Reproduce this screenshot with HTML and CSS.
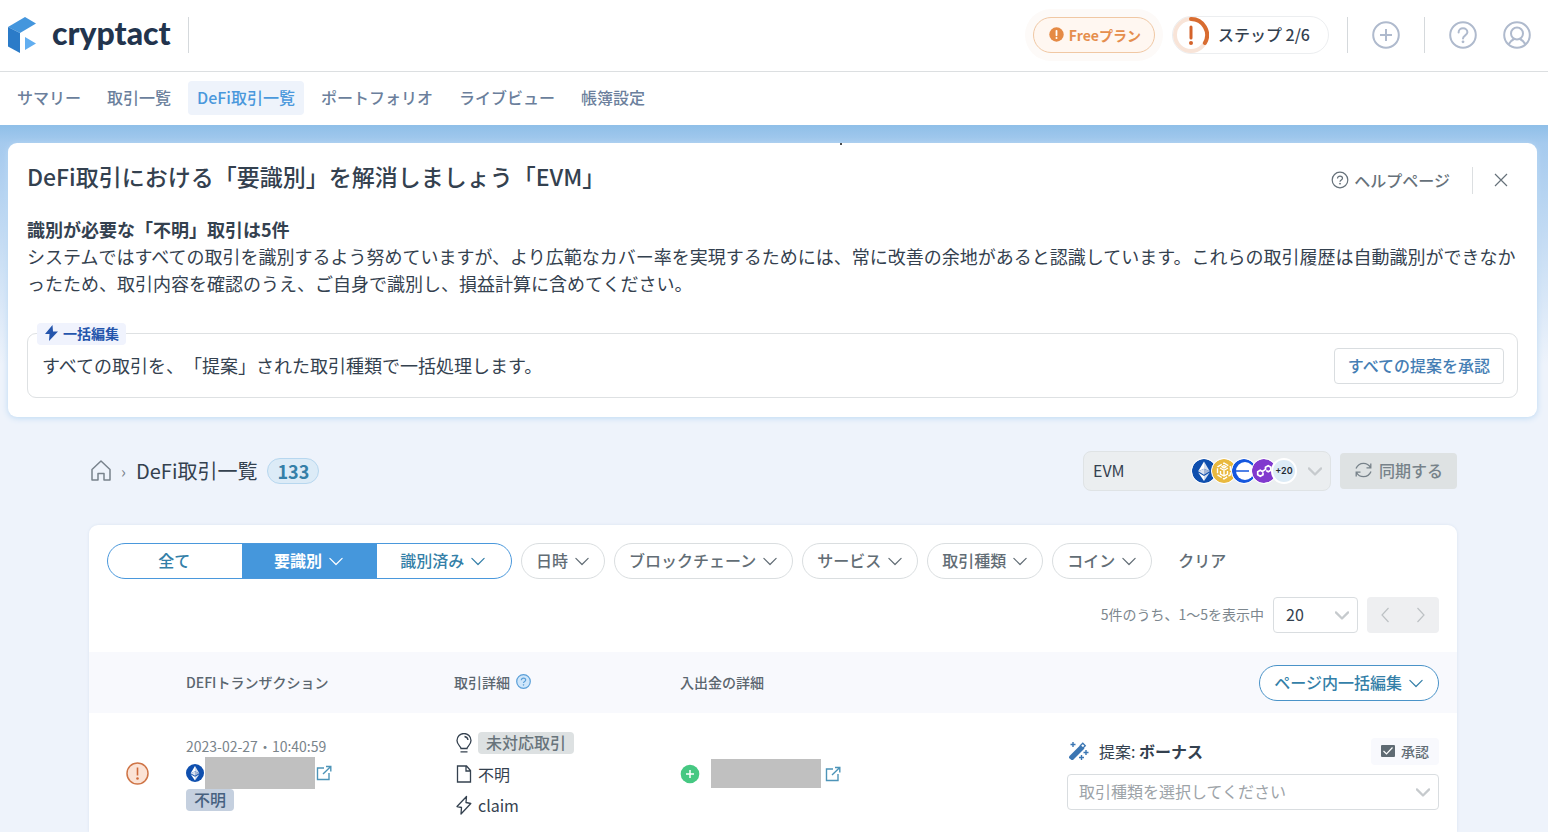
FILE: index.html
```html
<!DOCTYPE html>
<html lang="ja">
  <head>
    <meta charset="utf-8" />
    <meta name="viewport" content="width=device-width, initial-scale=1" />
    <title>DeFi取引一覧 | cryptact</title>
    <link rel="stylesheet" href="styles.css">
  </head>

  <body>
    <!-- shared icons -->
    <svg class="sprite" aria-hidden="true">
      <symbol id="i-chevron" viewBox="0 0 16 16">
        <path d="M1 5l7 7 7-7" fill="none" stroke="currentColor" stroke-linecap="round" stroke-linejoin="round" />
      </symbol>
      <symbol id="i-question" viewBox="0 0 28 28">
        <g fill="none" stroke="currentColor" stroke-width="2">
          <circle cx="14" cy="14" r="12.8" />
          <path d="M9.6 11.6c0-2.6 1.9-4.3 4.4-4.3s4.4 1.6 4.4 4c0 3.2-4.4 2.9-4.4 6.3" stroke-linecap="round" />
        </g>
        <circle cx="14" cy="20.8" r="1.4" fill="currentColor" />
      </symbol>
      <symbol id="i-external" viewBox="0 0 16 16">
        <path d="M8 3H1.500v11.500H13V8M10 1.500h4.800V6.500M14.500 1.800L7 9" fill="none" stroke="currentColor" stroke-width="1.400" />
      </symbol>
      <symbol id="i-eth" viewBox="0 0 24 24">
        <circle cx="12" cy="12" r="12" fill="#0f4fae" />
        <path d="M12 2.500L6.200 12.300 12 9.700z" fill="#fff" />
        <path d="M12 2.500l5.800 9.800L12 9.700z" fill="#d5dfef" />
        <path d="M6.200 12.300L12 9.700v6z" fill="#dbe3f0" />
        <path d="M17.800 12.300L12 9.700v6z" fill="#a5b7d6" />
        <path d="M6.200 13.500L12 17v5z" fill="#fff" />
        <path d="M17.800 13.500L12 17v5z" fill="#d5dfef" />
      </symbol>
    </svg>

    <header class="header">
      <a class="logo" href="#">
        <svg class="logo-mark" viewBox="0 0 28 36" aria-hidden="true">
          <path d="M0 10L17 0l11 6.500L12 16z" fill="#4496dd" />
          <path d="M0 10l12 6v20L0 29.500z" fill="#2b7bc8" />
          <path d="M17 20l11 6.500L17 33z" fill="#62aef0" />
        </svg>
        <span class="logo-text">cryptact</span>
      </a>
      <div class="header-actions">
        <button class="plan" type="button">
          <svg width="15" height="15" viewBox="0 0 15 15" aria-hidden="true">
            <circle cx="7.500" cy="7.500" r="7.200" fill="#e58a45" />
            <path d="M7.500 3.800v4.500" stroke="#fff" stroke-width="1.800" stroke-linecap="round" />
            <circle cx="7.500" cy="11" r="1" fill="#fff" />
          </svg>
          Freeプラン
        </button>
        <button class="step" type="button">
          <svg width="36" height="36" viewBox="0 0 36 36" fill="none" aria-hidden="true">
            <circle cx="18" cy="18" r="16" stroke="#f8e4d8" stroke-width="4" />
            <path d="M18 2a16 16 0 0 1 13.900 24" stroke="#d86c30" stroke-width="4" stroke-linecap="round" />
            <path d="M18 10v11" stroke="#d4622a" stroke-width="3" stroke-linecap="round" />
            <circle cx="18" cy="26" r="2" fill="#d4622a" />
          </svg>
          <span>ステップ 2/6</span>
        </button>
        <button class="round-icon round-icon-add" type="button" aria-label="追加">
          <svg width="28" height="28" viewBox="0 0 28 28" fill="none" stroke="currentColor" stroke-width="2" aria-hidden="true">
            <circle cx="14" cy="14" r="12.800" />
            <path d="M14 8v12M8 14h12" />
          </svg>
        </button>
        <button class="round-icon" type="button" aria-label="ヘルプ">
          <svg width="28" height="28" aria-hidden="true"><use href="#i-question" /></svg>
        </button>
        <button class="round-icon" type="button" aria-label="アカウント">
          <svg width="28" height="28" viewBox="0 0 28 28" fill="none" stroke="currentColor" stroke-width="2" aria-hidden="true">
            <circle cx="14" cy="14" r="12.800" />
            <circle cx="14" cy="12.500" r="6" />
            <path d="M5.500 23.500c1.500-3 3.500-4.500 5.500-5.500M22.500 23.500c-1.500-3-3.500-4.500-5.500-5.500" />
          </svg>
        </button>
      </div>
    </header>

    <nav class="nav">
      <a href="#">サマリー</a>
      <a href="#">取引一覧</a>
      <a class="active" href="#">DeFi取引一覧</a>
      <a href="#">ポートフォリオ</a>
      <a href="#">ライブビュー</a>
      <a href="#">帳簿設定</a>
    </nav>

    <main class="main">
      <section class="notice">
        <div class="notice-head">
          <h1>DeFi取引における「要識別」を解消しましょう「EVM」</h1>
          <a class="help-link" href="#">
            <svg width="18" height="18" viewBox="0 0 18 18" fill="none" stroke="currentColor" aria-hidden="true">
              <circle cx="9" cy="9" r="7.800" stroke-width="1.200" />
              <path d="M6.500 7.400c0-1.500 1.100-2.300 2.500-2.300s2.500.9 2.500 2.200c0 1.700-2.500 1.700-2.500 3.400" stroke-width="1.200" />
              <circle cx="9" cy="12.700" r=".5" fill="currentColor" />
            </svg>
            ヘルプページ
          </a>
          <button class="close" type="button" aria-label="閉じる">
            <svg width="14" height="14" viewBox="0 0 14 14" stroke="currentColor" stroke-width="1.200" aria-hidden="true">
              <path d="M1 1l12 12M13 1L1 13" />
            </svg>
          </button>
        </div>
        <div class="notice-body">
          <h2>識別が必要な「不明」取引は5件</h2>
          <p>システムではすべての取引を識別するよう努めていますが、より広範なカバー率を実現するためには、常に改善の余地があると認識しています。これらの取引履歴は自動識別ができなかったため、取引内容を確認のうえ、ご自身で識別し、損益計算に含めてください。</p>
        </div>
        <div class="bulk">
          <span class="bulk-label">
            <svg width="13" height="16" viewBox="0 0 13 16" aria-hidden="true">
              <path d="M7.500 0L0 9h4.500L4 16l9-9.500H8z" fill="currentColor" />
            </svg>
            一括編集
          </span>
          <p>すべての取引を、「提案」された取引種類で一括処理します。</p>
          <button type="button">すべての提案を承認</button>
        </div>
      </section>

      <div class="content">
        <div class="toolbar">
          <a class="home" href="#" aria-label="ホーム">
            <svg width="20" height="21" viewBox="0 0 20 21" fill="none" stroke="currentColor" stroke-width="1.500" stroke-linejoin="round" aria-hidden="true">
              <path d="M1 9.500L10 1l9 8.500V20h-6v-6.500H7V20H1z" />
            </svg>
          </a>
          <span class="sep">›</span>
          <span class="crumb">DeFi取引一覧</span>
          <span class="count">133</span>

          <div class="select-box chain">
            <select aria-label="チェーン">
              <option>EVM</option>
            </select>
            <span class="coins">
              <svg viewBox="0 0 24 24"><use href="#i-eth" /></svg>
              <svg viewBox="0 0 24 24">
                <circle cx="12" cy="12" r="12" fill="#e9b93f" />
                <g fill="none" stroke="#fff" stroke-width="1.400">
                  <path d="M12 4l6.500 3.800v8L12 20l-6.500-4.200v-8z" stroke-dasharray="5 1.500" />
                  <path d="M8 9l4 2.300L16 9M12 11v6M8.500 12v3l3.500 2 3.500-2v-3M12 6.500l2 1.200-2 1.300-2-1.300z" />
                </g>
              </svg>
              <svg viewBox="0 0 24 24">
                <circle cx="12" cy="12" r="12" fill="#1557de" />
                <circle cx="13" cy="12" r="9" fill="#fff" />
                <path d="M2 12h15" stroke="#1557de" stroke-width="1.600" />
              </svg>
              <svg viewBox="0 0 24 24">
                <circle cx="12" cy="12" r="12" fill="#8139ce" />
                <path d="M11 13.500v2.300l-2.700 1.500-2.600-1.500v-3l2.600-1.500 2 1.100 3.200-2V8.200l2.700-1.500 2.600 1.500v3l-2.600 1.500-2-1.100" fill="none" stroke="#fff" stroke-width="1.700" />
              </svg>
              <span class="more">+20</span>
            </span>
            <svg class="arrow" width="14" height="14"><use href="#i-chevron" /></svg>
          </div>
          <button class="sync" type="button" disabled>
            <svg width="17" height="16" viewBox="0 0 17 16" fill="none" stroke="currentColor" stroke-width="1.300" aria-hidden="true">
              <path d="M1 6.500C2.500 3 5.500 1.300 8.500 1.300c3 0 5.500 1.500 7 4.200M15.800 1.500v4.300h-4.300M16 9.500c-1.500 3.500-4.500 5.200-7.500 5.200-3 0-5.500-1.500-7-4.200M1.200 14.500v-4.300h4.300" />
            </svg>
            同期する
          </button>
        </div>

        <section class="panel">
          <div class="filters">
            <div class="segment">
              <button type="button">全て</button>
              <button class="on" type="button">要識別<svg class="chev"><use href="#i-chevron" /></svg></button>
              <button type="button">識別済み<svg class="chev"><use href="#i-chevron" /></svg></button>
            </div>
            <button class="pill" type="button">日時<svg class="chev"><use href="#i-chevron" /></svg></button>
            <button class="pill" type="button">ブロックチェーン<svg class="chev"><use href="#i-chevron" /></svg></button>
            <button class="pill" type="button">サービス<svg class="chev"><use href="#i-chevron" /></svg></button>
            <button class="pill" type="button">取引種類<svg class="chev"><use href="#i-chevron" /></svg></button>
            <button class="pill" type="button">コイン<svg class="chev"><use href="#i-chevron" /></svg></button>
            <button class="clear" type="button">クリア</button>
          </div>

          <div class="paging">
            <label for="page-size">5件のうち、1〜5を表示中</label>
            <div class="select-box size">
              <select id="page-size">
                <option>20</option>
              </select>
              <svg class="arrow" width="14" height="14"><use href="#i-chevron" /></svg>
            </div>
            <div class="pager">
              <button type="button" aria-label="前へ" disabled>
                <svg width="8" height="16" viewBox="0 0 8 16" fill="none" stroke="currentColor" stroke-width="1.200"><path d="M7.500 1L1 8l6.500 7" /></svg>
              </button>
              <button type="button" aria-label="次へ" disabled>
                <svg width="8" height="16" viewBox="0 0 8 16" fill="none" stroke="currentColor" stroke-width="1.200"><path d="M.5 1L7 8 .5 15" /></svg>
              </button>
            </div>
          </div>

          <table class="tx">
            <colgroup>
              <col class="col-status" />
              <col class="col-tx" />
              <col class="col-detail" />
              <col />
              <col class="col-action" />
            </colgroup>
            <thead>
              <tr>
                <th></th>
                <th>DEFIトランザクション</th>
                <th>
                  <span class="th-help">取引詳細
                    <svg width="15" height="15" viewBox="0 0 15 15" fill="none" stroke="#5a9fd8" aria-hidden="true">
                      <circle cx="7.500" cy="7.500" r="6.800" fill="#cfe6fa" stroke-width="1.200" />
                      <path d="M5.300 6.200c0-1.400 1-2.100 2.200-2.100s2.200.8 2.200 1.900c0 1.500-2.200 1.400-2.200 3" stroke-width="1.200" />
                      <circle cx="7.500" cy="10.900" r=".4" />
                    </svg>
                  </span>
                </th>
                <th>入出金の詳細</th>
                <th class="th-action"><button class="pill blue" type="button">ページ内一括編集<svg class="chev"><use href="#i-chevron" /></svg></button></th>
              </tr>
            </thead>
            <tbody>
              <tr>
                <td class="status">
                  <svg width="23" height="23" viewBox="0 0 23 23" aria-label="要識別">
                    <circle cx="11.500" cy="11.500" r="10.500" fill="#fbe3d6" stroke="#cf7547" stroke-width="1.500" />
                    <path d="M11.500 5.500v8" stroke="#cf6a3a" stroke-width="1.600" />
                    <circle cx="11.500" cy="16.500" r="1.300" fill="#cf6a3a" />
                  </svg>
                </td>
                <td>
                  <div class="date">2023-02-27・10:40:59</div>
                  <div class="hash">
                    <svg width="18" height="18"><use href="#i-eth" /></svg>
                    <span class="mask"></span>
                    <a href="#" aria-label="エクスプローラーで開く"><svg width="16" height="16"><use href="#i-external" /></svg></a>
                  </div>
                  <span class="tag tag-blue">不明</span>
                </td>
                <td>
                  <ul class="detail">
                    <li>
                      <svg width="18" height="20" viewBox="0 0 18 20" fill="none" stroke="currentColor" stroke-width="1.300" aria-hidden="true">
                        <path d="M6 15.500c0-2-4-3.500-4-8a7 7 0 0 1 14 0c0 4.500-4 6-4 8zM9.500 3.500a4 4 0 0 1 3.500 3.500M5.500 18.800h7" />
                      </svg>
                      <span class="tag">未対応取引</span>
                    </li>
                    <li>
                      <svg width="18" height="18" viewBox="0 0 18 18" fill="none" stroke="currentColor" stroke-width="1.300" aria-hidden="true">
                        <path d="M2.500 1h9l4 4.500V17h-13zM11 1v5h4.500" />
                      </svg>
                      不明
                    </li>
                    <li>
                      <svg width="18" height="20" viewBox="0 0 18 20" fill="none" stroke="currentColor" stroke-width="1.300" stroke-linejoin="round" aria-hidden="true">
                        <path d="M11.500 1.500L2 11.500l4.500 1-.5 6.500 9.800-10.500-4.800-1z" />
                      </svg>
                      claim
                    </li>
                  </ul>
                </td>
                <td>
                  <div class="amount">
                    <svg width="20" height="20" viewBox="0 0 20 20" aria-label="入金">
                      <circle cx="10" cy="10" r="9.300" fill="#46c882" />
                      <path d="M10 6v8M6 10h8" stroke="#fff" stroke-width="1.500" />
                    </svg>
                    <span class="mask"></span>
                    <a href="#" aria-label="エクスプローラーで開く"><svg width="16" height="16"><use href="#i-external" /></svg></a>
                  </div>
                </td>
                <td class="action">
                  <div class="suggest">
                    <svg width="20" height="18" viewBox="0 0 20 18" aria-hidden="true">
                      <path d="M0 14.500L11.500 3l4 3.500L4 18H2.500L0 16z" fill="#3b76b3" />
                      <path d="M11 4l2.800-2.800 2.500 2.500L13.500 6.500" fill="none" stroke="#3b76b3" stroke-width="1.300" />
                      <path d="M4 0v5M1.500 2.500h5M17 8v5M14.500 10.500h5M12.500 13v5M10 15.500h5" stroke="#3b76b3" stroke-width="1.400" />
                    </svg>
                    <label for="tx-type">提案: <b>ボーナス</b></label>
                    <button class="approve" type="button">
                      <svg width="14" height="12" viewBox="0 0 14 12" aria-hidden="true">
                        <rect width="14" height="12" rx="1" fill="#5f6b73" />
                        <path d="M2.500 6l3 3 6-6.500" fill="none" stroke="#fff" stroke-width="1.200" />
                      </svg>
                      承認
                    </button>
                  </div>
                  <div class="select-box type">
                    <select id="tx-type">
                      <option>取引種類を選択してください</option>
                    </select>
                    <svg class="arrow" width="14" height="14"><use href="#i-chevron" /></svg>
                  </div>
                </td>
              </tr>
            </tbody>
          </table>
        </section>
      </div>
    </main>
  </body>
</html>
```

FILE: styles.css
```css
* {
  box-sizing: border-box;
}

body {
  margin: 0;
  background: #eef3fb;
  font-family: 'Noto Sans CJK JP', sans-serif;
  font-size: 16px;
  line-height: 24px;
  text-spacing-trim: space-all;
  color: #34414f;
}

h1,
h2,
p,
ul {
  margin: 0;
  padding: 0;
}

a {
  color: inherit;
  text-decoration: none;
}

svg {
  display: block;
  flex: none;
}

button,
select {
  margin: 0;
  padding: 0;
  border: 0;
  background: none;
  font: inherit;
  color: inherit;
  white-space: nowrap;
}

button {
  display: flex;
  align-items: center;
  justify-content: center;
  font-weight: 500;
  cursor: pointer;
}

.sprite {
  position: absolute;
  width: 0;
  height: 0;
}

/* header */
.header {
  display: flex;
  align-items: center;
  justify-content: space-between;
  height: 72px;
  padding: 0 17px 2px 8px;
  background: #fff;
  border-bottom: 1px solid #dcdfe1;
}

.logo {
  display: flex;
  height: 36px;
  padding-right: 17px;
  border-right: 1px solid #d5d9dc;
}

.logo-mark {
  width: 28px;
  height: 36px;
}

.logo-text {
  margin-left: 16px;
  font-family: Lato, sans-serif;
  font-size: 32px;
  font-weight: 900;
  line-height: 32px;
  color: #22344d;
}

.header-actions {
  display: flex;
  align-items: center;
}

.plan {
  gap: 5px;
  height: 36px;
  padding: 0 13px 0 15px;
  border: 1px solid #f0c8a4;
  border-radius: 18px;
  background: #fff7f1;
  box-shadow: 0 0 0 8px #fdfaf8;
  font-size: 14px;
  font-weight: 700;
  color: #e58e4d;
}

.step {
  gap: 9px;
  height: 38px;
  margin-left: 17px;
  padding-right: 18px;
  border: 1px solid #eceef0;
  border-radius: 19px;
}

.step span {
  padding-bottom: 2px;
}

.round-icon {
  margin-left: 26px;
  color: #afbacd;
}

.round-icon-add {
  height: 36px;
  margin-left: 18px;
  margin-right: -2px;
  padding: 0 24px;
  border-left: 1px solid #d5d9dc;
  border-right: 1px solid #d5d9dc;
}

/* navigation */
.nav {
  display: flex;
  gap: 8px;
  padding: 9px 8px 10px;
  background: #fff;
  font-weight: 500;
  color: #6b7f9c;
}

.nav a {
  padding: 4px 9px 6px;
  border-radius: 4px;
}

.nav .active {
  background: #eef3fb;
  color: #4a98dc;
}

.main {
  padding: 18px 11px 0 8px;
  background: linear-gradient(#8fbfe8, #a5caee 18px, #eef3fb 240px);
}

/* notice */
.notice {
  position: relative;
  padding: 17px 14px 19px 19px;
  background: #fff;
  border-radius: 9px;
  box-shadow: 0 1px 6px #bcd9f3;
}

.notice::before {
  content: '';
  position: absolute;
  top: 0;
  left: 832px;
  width: 2px;
  height: 2px;
  border-radius: 1px;
  background: #111;
}

.notice-head {
  display: flex;
  align-items: center;
  margin-right: 15px;
}

.notice-head h1 {
  flex: 1;
  padding-bottom: 4px;
  font-size: 23px;
  font-weight: 500;
  line-height: 32px;
}

.help-link {
  display: flex;
  align-items: center;
  gap: 5px;
  margin-top: 3px;
  padding-right: 22px;
  font-weight: 500;
  color: #66717a;
}

.close {
  height: 27px;
  margin-top: 4px;
  padding-left: 21px;
  border-left: 1px solid #dcdfe1;
  color: #66717a;
}

.notice-body {
  margin-top: 20px;
  font-size: 18px;
  line-height: 27px;
}

.notice-body h2 {
  font-size: 18px;
  font-weight: 700;
}

.bulk {
  position: relative;
  display: flex;
  align-items: center;
  justify-content: space-between;
  margin: 36px 5px 0 0;
  padding: 14px 13px 13px 14px;
  border: 1px solid #dee1e3;
  border-radius: 9px;
  font-size: 18px;
}

.bulk p {
  padding-bottom: 2px;
}

.bulk-label {
  position: absolute;
  top: -11px;
  left: 9px;
  display: flex;
  align-items: center;
  gap: 5px;
  padding: 0 7px 2px 8px;
  border-radius: 4px;
  background: #f0f3fd;
  font-size: 14px;
  font-weight: 700;
  line-height: 20px;
  color: #2455ac;
}

.bulk button {
  height: 36px;
  padding: 0 13px 2px;
  border: 1px solid #d9dde0;
  border-radius: 4px;
  font-size: 16px;
  color: #457eb4;
}

/* breadcrumb and sync */
.content {
  margin: 0 80px 0 81px;
}

.toolbar {
  display: flex;
  align-items: center;
  padding: 34px 0;
}

.home {
  padding: 0 0 2px 2px;
  color: #78828c;
}

.sep {
  width: 25px;
  text-align: center;
  color: #78828c;
}

.crumb {
  font-size: 20px;
}

.count {
  margin: 0 auto 0 10px;
  padding: 0 9px;
  border: 1px solid #b7d7ef;
  border-radius: 13px;
  background: #dcebf7;
  font-size: 18px;
  font-weight: 700;
  color: #347fa8;
}

.select-box {
  position: relative;
}

.select-box select {
  appearance: none;
  display: block;
  width: 100%;
  height: 36px;
  padding: 0 12px 2px;
  border: 1px solid #d9dde0;
  border-radius: 4px;
  background: #fff;
}

.select-box .arrow {
  position: absolute;
  top: 0;
  bottom: 0;
  right: 9px;
  margin: auto 0;
  color: #c6cacd;
  stroke-width: 2.6;
  pointer-events: none;
}

.select-box.chain {
  width: 248px;
}

.chain select {
  height: 40px;
  padding: 0 9px 2px;
  border-color: #dfe3e5;
  border-radius: 8px;
  background: #ebeef0;
}

.coins {
  position: absolute;
  top: 7px;
  right: 34px;
  display: flex;
  pointer-events: none;
}

.coins svg,
.coins .more {
  width: 26px;
  height: 26px;
  margin-left: -6px;
  border: 1px solid #fff;
  border-radius: 13px;
  background: #fff;
}

.coins .more {
  border-width: 2px;
  background: #dcebf6;
  font-family: Inter, sans-serif;
  font-size: 9px;
  font-weight: 600;
  line-height: 22px;
  text-align: center;
  color: #1f2a33;
}

.sync {
  gap: 7px;
  height: 36px;
  margin-left: 9px;
  padding: 0 14px 2px 15px;
  border-radius: 4px;
  background: #dee2e3;
  color: #77828a;
}

/* panel */
.panel {
  background: #fff;
  border-radius: 9px 9px 0 0;
  box-shadow: 0 0 3px #d8e2f0;
}

.filters {
  display: flex;
  gap: 9px;
  padding: 18px 18px 0;
}

.segment {
  display: flex;
  width: 405px;
  height: 36px;
  border: 1px solid #4a98dc;
  border-radius: 18px;
  overflow: hidden;
}

.segment button {
  flex: 1;
  padding: 0 2px 2px 0;
  color: #347fa8;
}

.segment .on {
  background: #4597dc;
  font-weight: 700;
  color: #fff;
}

.chev {
  width: 14px;
  height: 14px;
  margin: 2px 0 0 7px;
  stroke-width: 1.4;
}

.pill {
  height: 36px;
  padding: 0 15px 2px 14px;
  border: 1px solid #dadee0;
  border-radius: 18px;
  color: #626d75;
}

.clear {
  margin-left: 17px;
  padding-bottom: 2px;
  color: #626d75;
}

.blue {
  border-color: #4a93c8;
  background: #fff;
  font-size: 16px;
  color: #347fa8;
}

.paging {
  display: flex;
  align-items: center;
  justify-content: flex-end;
  gap: 9px;
  padding: 18px 18px 19px;
}

.paging label {
  padding-bottom: 2px;
  font-size: 14px;
  color: #7d878e;
}

.size {
  width: 85px;
}

.pager {
  display: flex;
  width: 72px;
  height: 36px;
  border-radius: 4px;
  background: #eeeff1;
  color: #bdc1c4;
}

.pager button {
  flex: 1;
}

/* table */
.tx {
  width: 100%;
  table-layout: fixed;
  border-collapse: collapse;
}

.col-status {
  width: 97px;
}

.col-tx {
  width: 268px;
}

.col-detail {
  width: 226px;
}

.col-action {
  width: 390px;
}

.tx th {
  height: 61px;
  padding: 0 0 2px;
  background: #f8f9fd;
  font-size: 14px;
  font-weight: 500;
  text-align: left;
  color: #5b666f;
}

.tx .th-action {
  padding: 0 18px 0 0;
}

.th-action .pill {
  margin-left: auto;
}

.th-help {
  display: flex;
  align-items: center;
  gap: 6px;
}

.tx td {
  padding: 14px 0 12px;
}

.status svg {
  margin-left: 37px;
}

.date {
  padding-bottom: 2px;
  font-size: 14px;
  line-height: 18px;
  color: #7a848b;
}

.hash,
.amount {
  display: flex;
  align-items: center;
  gap: 1px;
  color: #4d94b8;
}

.mask {
  width: 110px;
  height: 32px;
  background: #c0c0c0;
}

.amount {
  gap: 4px;
}

.amount .mask {
  height: 29px;
  margin-left: 7px;
}

.tag {
  display: inline-block;
  padding: 0 8px 2px;
  border-radius: 4px;
  background: #dde1e2;
  font-weight: 500;
  line-height: 20px;
  color: #68747b;
}

.tag-blue {
  display: block;
  width: max-content;
  background: #c5d0df;
  color: #47617f;
}

.detail {
  list-style: none;
}

.detail li {
  display: flex;
  align-items: center;
  gap: 5px;
  height: 31px;
  padding-left: 1px;
}

.tx .action {
  padding-right: 18px;
}

.suggest {
  display: flex;
  align-items: center;
  gap: 10px;
  margin-bottom: 9px;
  padding-left: 2px;
}

.approve {
  gap: 6px;
  height: 27px;
  margin-left: auto;
  padding: 0 10px;
  border-radius: 4px;
  background: #f8f9fd;
  font-size: 14px;
  color: #626d75;
}

.type select {
  padding: 0 11px 2px;
  color: #9da3a8;
}
```
